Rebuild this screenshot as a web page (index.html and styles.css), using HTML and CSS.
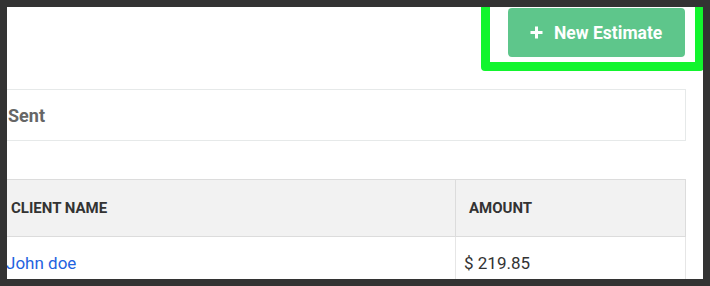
FILE: index.html
```html
<!DOCTYPE html>
<html>
<head>
    <meta charset="utf-8">
    <title>Estimates</title>
    <link rel="stylesheet" href="styles.css">
</head>
<body>
    <div class="viewport">
        <div class="content">
            <div class="toolbar">
                <button class="new-btn">
                    <svg class="plus" width="13" height="13" viewBox="0 0 13 13">
                        <path d="M6.5 0.5v12M0.5 6.5h12" stroke="#fff" stroke-width="3" fill="none"/>
                    </svg>
                    <span>New Estimate</span>
                </button>
            </div>

            <div class="panel">Sent</div>

            <table class="estimates">
                <thead>
                    <tr>
                        <th class="col-client">CLIENT NAME</th>
                        <th class="col-amount">AMOUNT</th>
                    </tr>
                </thead>
                <tbody>
                    <tr>
                        <td><a href="#">John doe</a></td>
                        <td>$ 219.85</td>
                    </tr>
                </tbody>
            </table>
        </div>
        <div class="highlight"></div>
    </div>
</body>
</html>
```

FILE: styles.css
```css
* {
    margin: 0;
    padding: 0;
    box-sizing: border-box;
}

body {
    background: #333;
    padding: 7px;
    font-family: Roboto, "Liberation Sans", sans-serif;
}

.viewport {
    position: relative;
    height: 272px;
    background: #fff;
    overflow: hidden;
}

.content {
    margin-left: -10px;
    margin-right: 17px;
    padding-top: 1px;
}

.toolbar {
    display: flex;
    justify-content: flex-end;
}

.new-btn {
    display: flex;
    align-items: center;
    gap: 11px;
    height: 49px;
    width: 177px;
    margin-right: 1px;
    padding: 0 0 0 22px;
    border: none;
    border-radius: 4px;
    background: #5ec68b;
    color: #fff;
    font-family: inherit;
    font-size: 17.5px;
    font-weight: 700;
    cursor: pointer;
}

.plus {
    display: block;
    flex-shrink: 0;
}

.panel {
    margin-top: 32px;
    height: 52px;
    display: flex;
    align-items: center;
    padding: 0 10px;
    border: 1px solid #e6e9e9;
    font-size: 18px;
    font-weight: 700;
    color: #666;
}

.estimates {
    width: 100%;
    margin-top: 38px;
    border-collapse: collapse;
}

.estimates th {
    height: 57px;
    padding: 0 13px;
    text-align: left;
    background: #f2f2f2;
    border: 1px solid #dcdcdc;
    font-size: 15px;
    font-weight: 700;
    color: #333;
}

.col-amount {
    width: 230px;
}

.estimates td {
    padding: 16px 8px;
    font-size: 17px;
    color: #333;
    border-left: 1px solid #e6e6e6;
    border-right: 1px solid #e6e6e6;
}

.estimates td a {
    color: #1f63e0;
    text-decoration: none;
}

.highlight {
    position: absolute;
    left: 474px;
    top: -20px;
    right: -1px;
    height: 84px;
    border: 9px solid #12f52e;
    border-radius: 4px;
}
```
